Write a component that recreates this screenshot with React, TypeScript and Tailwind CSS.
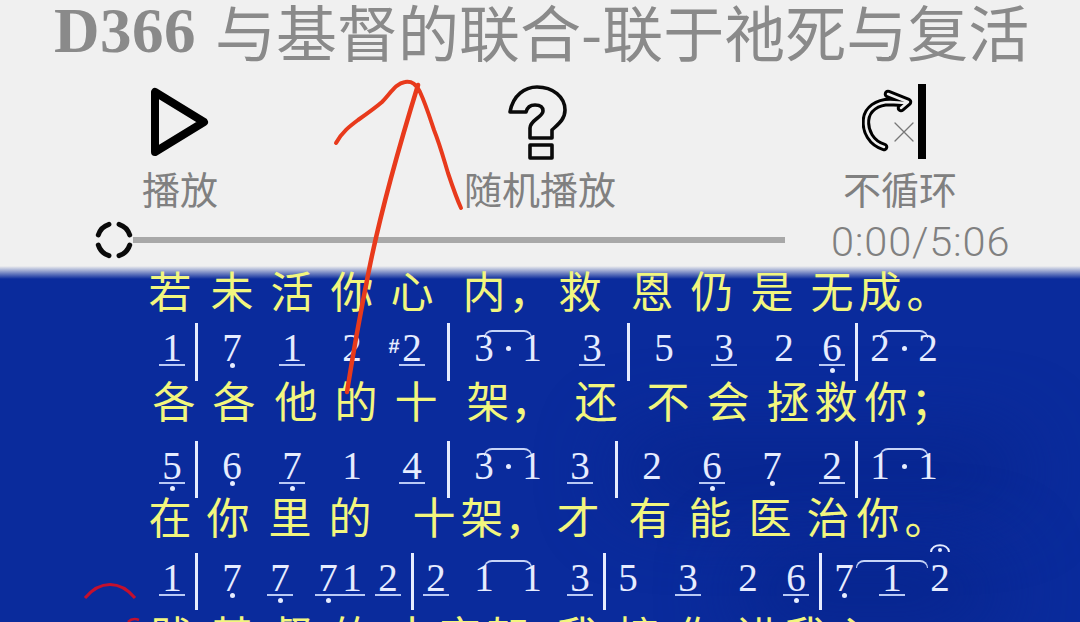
const CJK = "font-['Noto_Sans_CJK_SC',sans-serif]"

type Note = { x: number; d: string; u?: boolean; low?: boolean }
type Row = {
  lyric: [number, string][]
  lyricClass: string
  notes: Note[]
  bars: number[]
  ties: [number, number][]
  noteClass: string
}

const ROWS: Row[] = [
  {
    lyricClass: 'h-[57px] pt-[6px]',
    lyric: [
      [170, '若'], [231, '未'], [292, '活'], [351, '你'], [411, '心'], [484, '内'], [529, '，'],
      [580, '救'], [651, '恩'], [712, '仍'], [771, '是'], [832, '无'], [879, '成'], [927, '。'],
    ],
    noteClass: 'h-[58px]',
    bars: [196, 448, 628, 856],
    ties: [[484, 532], [880, 928]],
    notes: [
      { x: 172, d: '1', u: true }, { x: 232, d: '7', low: true }, { x: 292, d: '1', u: true },
      { x: 352, d: '2' }, { x: 394, d: '#' }, { x: 412, d: '2', u: true },
      { x: 484, d: '3' }, { x: 508, d: '·' }, { x: 532, d: '1' }, { x: 592, d: '3', u: true },
      { x: 664, d: '5' }, { x: 724, d: '3', u: true }, { x: 784, d: '2' }, { x: 832, d: '6', u: true, low: true },
      { x: 880, d: '2' }, { x: 904, d: '·' }, { x: 928, d: '2' },
    ],
  },
  {
    lyricClass: 'h-[60px] pt-[1px]',
    lyric: [
      [174, '各'], [234, '各'], [296, '他'], [355, '的'], [415, '十'], [488, '架'], [532, '，'],
      [595, '还'], [667, '不'], [727, '会'], [787, '拯'], [836, '救'], [885, '你'], [931, '；'],
    ],
    noteClass: 'h-[57px]',
    bars: [196, 448, 616, 856],
    ties: [[484, 532], [880, 928]],
    notes: [
      { x: 172, d: '5', u: true, low: true }, { x: 232, d: '6', low: true }, { x: 292, d: '7', u: true, low: true },
      { x: 352, d: '1' }, { x: 412, d: '4', u: true },
      { x: 484, d: '3' }, { x: 508, d: '·' }, { x: 532, d: '1' }, { x: 580, d: '3', u: true },
      { x: 652, d: '2' }, { x: 712, d: '6', u: true, low: true }, { x: 772, d: '7', low: true }, { x: 832, d: '2', u: true },
      { x: 880, d: '1' }, { x: 904, d: '·' }, { x: 928, d: '1' },
    ],
  },
  {
    lyricClass: 'h-[55px]',
    lyric: [
      [169, '在'], [228, '你'], [289, '里'], [349, '的'], [433, '十'], [481, '架'], [526, '，'],
      [577, '才'], [649, '有'], [709, '能'], [769, '医'], [828, '治'], [878, '你'], [926, '。'],
    ],
    noteClass: 'h-[57px]',
    bars: [196, 412, 604, 820],
    ties: [[484, 532], [856, 928]],
    notes: [
      { x: 172, d: '1', u: true }, { x: 232, d: '7', low: true }, { x: 280, d: '7', u: true, low: true },
      { x: 328, d: '7', u: true, low: true }, { x: 352, d: '1', u: true }, { x: 388, d: '2', u: true },
      { x: 436, d: '2', u: true }, { x: 484, d: '1' }, { x: 532, d: '1' }, { x: 580, d: '3', u: true },
      { x: 628, d: '5' }, { x: 688, d: '3', u: true }, { x: 748, d: '2' }, { x: 796, d: '6', u: true, low: true },
      { x: 844, d: '7', low: true }, { x: 892, d: '1', u: true }, { x: 940, d: '2' },
    ],
  },
]

const LAST_LYRIC: [number, string][] = [
  [171, '践'], [232, '基'], [292, '督'], [352, '的'], [412, '十'], [460, '字'], [508, '架'], [548, '，'],
  [577, '我'], [637, '接'], [697, '你'], [757, '进'], [805, '我'], [853, '心'],
]

// columns are 2px wide, so a centre x and a width in px give the grid placement
const place = (x: number, w: number) => ({
  gridColumn: `${Math.round((x - w / 2) / 2) + 1} / span ${Math.round(w / 2)}`,
  gridRow: 1,
})

function Lyric({ items, className }: { items: [number, string][]; className: string }) {
  return (
    <div className={`grid grid-cols-[repeat(540,2px)] items-start ${className}`}>
      {items.map(([x, ch], i) => (
        <span
          key={i}
          style={place(x, 48)}
          className={`${CJK} mt-[-4px] text-center text-[43px] leading-none text-[#f2f67e]`}
        >
          {ch}
        </span>
      ))}
    </div>
  )
}

function NoteCell({ note }: { note: Note }) {
  if (note.d === '·') {
    return (
      <div style={place(note.x, 24)} className="flex justify-center pt-[23px]">
        <div className="size-[5px] rounded-full bg-[#e6ecff]" />
      </div>
    )
  }
  if (note.d === '#') {
    return (
      <span
        style={place(note.x, 24)}
        className="pt-[13px] text-center font-['Liberation_Sans',sans-serif] text-[20px] font-bold leading-[20px] text-[#e6ecff]"
      >
        #
      </span>
    )
  }
  return (
    <div style={place(note.x, 32)} className="flex flex-col items-center pt-[11px]">
      <span className="h-[27px] font-['Liberation_Serif',serif] text-[39px] leading-[27px] text-[#e6ecff]">
        {note.d}
      </span>
      <div className={`mt-[3px] h-[2px] w-[26px] ${note.u ? 'bg-[#b9c9f5]' : 'bg-transparent'}`} />
      {note.low && (
        <div className={`size-[5px] rounded-full bg-[#e6ecff] ${note.u ? 'mt-[2px]' : 'mt-[-3px]'}`} />
      )}
    </div>
  )
}

function NoteRow({ row, fermata }: { row: Row; fermata?: boolean }) {
  return (
    <div className={`grid grid-cols-[repeat(540,2px)] ${row.noteClass}`}>
      {row.bars.map((x) => (
        <div key={x} style={place(x, 4)} className="mx-auto h-full w-[3px] bg-[#e6ecff]" />
      ))}
      {row.ties.map(([a, b]) => (
        <div
          key={a}
          style={place((a + b) / 2, b - a)}
          className="mt-[7px] h-[8px] rounded-t-[8px] border-x border-t-2 border-[#c7d4f7]"
        />
      ))}
      {row.notes.map((n, i) => (
        <NoteCell key={i} note={n} />
      ))}
      {fermata && (
        <svg style={place(940, 24)} className="mt-[-13px] justify-self-center" width="22" height="14" viewBox="0 0 22 14">
          <path d="M2 12 C3 3 19 3 20 12" fill="none" stroke="#e6ecff" strokeWidth="2" />
          <circle cx="11" cy="10" r="2" fill="#e6ecff" />
        </svg>
      )}
    </div>
  )
}

function PlayIcon() {
  return (
    <svg width="76" height="80" viewBox="0 0 76 80">
      <path d="M13 10 L13 70 L62 40 Z" fill="none" stroke="#000" strokeWidth="8" strokeLinejoin="round" />
    </svg>
  )
}

function HelpIcon() {
  return (
    <svg width="76" height="80" viewBox="22 12 76 80" fill="none" stroke="#0a0a0a" strokeWidth="3.6" strokeLinejoin="round">
      <path d="M30 42 C33 25 45 17 57 17 C73 17 85 27 85 40 C85 50 77 55 72 60 L72 68 L50 68 L50 58 C50 50 63 47 63 41 C63 37 60 35 55 35 C50 35 47 38 46 42 Z" />
      <rect x="50" y="75" width="22" height="13" />
    </svg>
  )
}

function LoopOffIcon() {
  const curve = 'M44 77 C31 73 25 61 26 50 C27 39 37 32 50 32 L66 33'
  const head = 'M48 24 L68 32 L61 38'
  return (
    <svg width="76" height="80" viewBox="22 12 76 80" fill="none" strokeLinecap="round" strokeLinejoin="round">
      <path d={curve} stroke="#000" strokeWidth="8.5" />
      <path d={head} stroke="#000" strokeWidth="8.5" />
      <path d={curve} stroke="#f0f0f0" strokeWidth="2.5" />
      <path d={head} stroke="#f0f0f0" strokeWidth="2.5" />
      <path d="M55 53 L73 71 M73 53 L55 71" stroke="#777" strokeWidth="1.3" />
      <rect x="78" y="14" width="8" height="75" fill="#000" />
    </svg>
  )
}

const CONTROLS = [
  { label: '播放', icon: <PlayIcon /> },
  { label: '随机播放', icon: <HelpIcon /> },
  { label: '不循环', icon: <LoopOffIcon /> },
]

export default function App() {
  return (
    <div className="relative h-[622px] w-[1080px] overflow-hidden bg-[#f0f0f0]">
      <header className="h-[266px]">
        <h1 className={`flex h-[82px] items-start whitespace-nowrap pl-[54px] ${CJK} text-[61px] font-normal leading-[62px] text-[#8a8a8a]`}>
          <span className="mr-[19px] font-['Liberation_Serif',serif] text-[63px] font-bold tracking-[0.5px]">D366</span>
          <span>与基督的联合-联于祂死与复活</span>
        </h1>
        <div className="grid h-[140px] grid-cols-3">
          {CONTROLS.map((c) => (
            <div key={c.label} className="flex flex-col items-center">
              {c.icon}
              <span className={`mt-[6px] ${CJK} text-[38px] leading-[40px] text-[#808080]`}>{c.label}</span>
            </div>
          ))}
        </div>
        <div className="flex h-[36px] items-center pl-[93px]">
          <svg width="42" height="42" viewBox="0 0 42 42" className="shrink-0">
            <circle
              cx="21"
              cy="21"
              r="16.5"
              fill="none"
              stroke="#0a0a0a"
              strokeWidth="5"
              pathLength={100}
              strokeDasharray="15 10"
              strokeDashoffset="-5"
              strokeLinecap="round"
            />
          </svg>
          <div className="ml-[-2px] h-[6px] w-[652px] shrink-0 bg-[#a8a8a8]" />
          <span className="ml-[46px] mt-[4px] font-['Roboto',sans-serif] text-[41.5px] font-light leading-[36px] tracking-[0.8px] text-[#808080]">
            0:00/5:06
          </span>
        </div>
      </header>

      <main className="relative h-[356px] bg-[linear-gradient(to_bottom,#f0f0f0_0px,#0a2b9c_13px)]">
        <div className="absolute right-[60px] top-[175px] h-[60px] w-[400px] rounded-full bg-[#07248c] blur-2xl" />
        <div className="absolute right-[80px] top-[290px] h-[70px] w-[260px] rounded-full bg-[#07248c] blur-2xl" />
        <div className="relative">
          {ROWS.map((row, i) => (
            <div key={i}>
              <Lyric items={row.lyric} className={row.lyricClass} />
              <NoteRow row={row} fermata={i === 2} />
            </div>
          ))}
          <Lyric items={LAST_LYRIC} className="h-[20px] pt-[7px]" />
        </div>
      </main>

      {/* pen marks drawn over the page */}
      <svg className="pointer-events-none absolute inset-0" width="1080" height="622" viewBox="0 0 1080 622" fill="none">
        <path
          d="M347 392 C352 360 362 305 369 270 C378 225 398 150 418 85"
          stroke="#e83a1c"
          strokeWidth="4.5"
          strokeLinecap="round"
        />
        <path
          d="M336 143 C342 132 350 126 358 120 C368 113 375 108 382 102 C390 94 396 83 405 82 C412 81 416 84 420 92 C426 105 430 118 434 130 C440 145 444 160 448 173 C452 185 456 197 461 208"
          stroke="#e83a1c"
          strokeWidth="4"
          strokeLinecap="round"
        />
        <path d="M85 598 C100 580 120 580 135 598" stroke="#c4102e" strokeWidth="3" />
        <path d="M128 622 C131 619 134 618 139 620" stroke="#c4102e" strokeWidth="2.5" />
      </svg>
    </div>
  )
}
